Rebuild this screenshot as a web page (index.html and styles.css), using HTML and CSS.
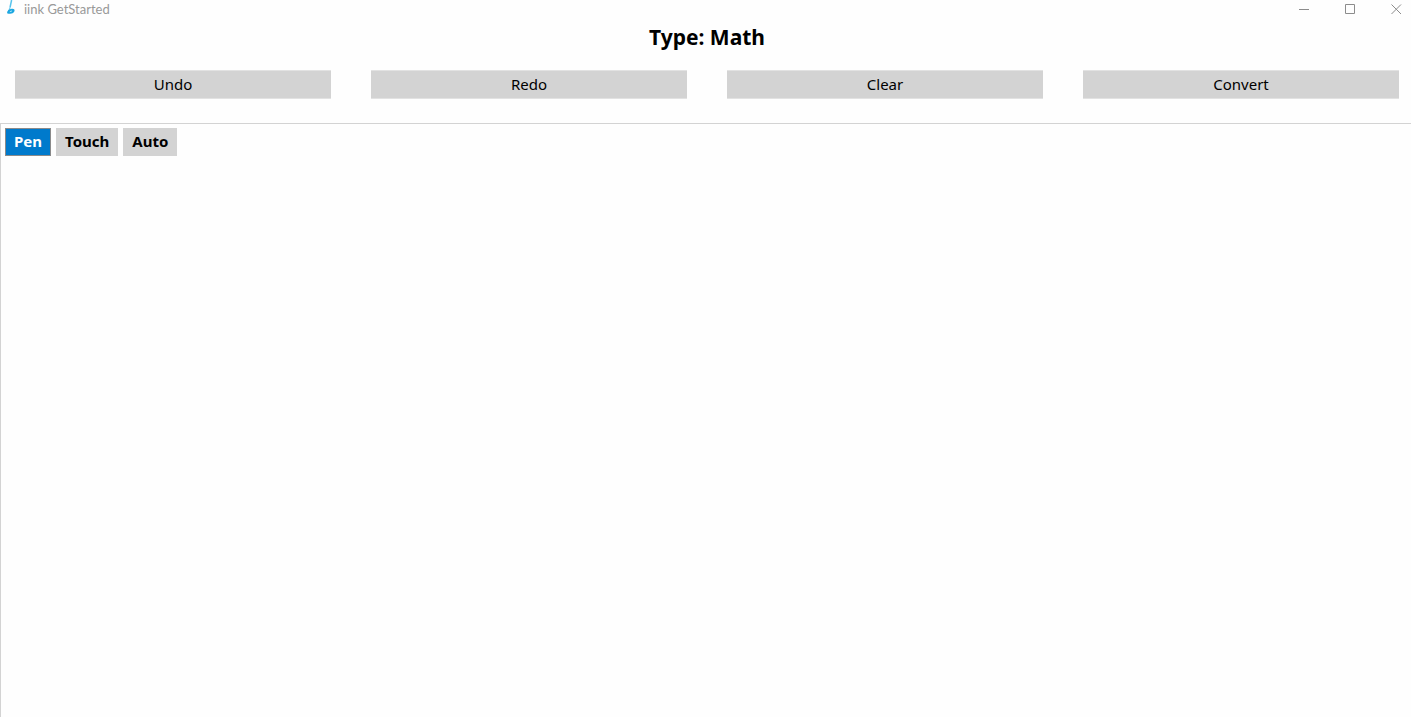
FILE: index.html
```html
<!DOCTYPE html>
<html lang="en">
<head>
<meta charset="utf-8">
<title>iink GetStarted</title>
<link rel="stylesheet" href="styles.css">
</head>
<body>
<header class="titlebar">
  <svg class="app-icon" width="10" height="15" viewBox="0 0 10 15" aria-hidden="true">
    <path d="M5.6 0 4 7.6" stroke="#55c3ec" stroke-width="1.5" fill="none"/>
    <path d="M4 7.6 3.2 10 1.6 13.2" stroke="#7fd2f0" stroke-width="1.4" fill="none"/>
    <path d="M1.2 13.2C1 10.6 3 9 5.8 8.8 8.2 8.6 9.2 9.8 8.2 11.8 7.2 13.8 4 14.2 1.2 13.2Z" fill="#1ba6e0"/>
    <path d="M3.8 11.7 6 10.9" stroke="#a5e2f7" stroke-width="1"/>
  </svg>
  <span class="app-name">iink GetStarted</span>
  <div class="window-controls">
    <button class="window-button" type="button" aria-label="Minimize"><svg width="11" height="11" viewBox="0 0 11 11"><path d="M0 5.5H10"/></svg></button>
    <button class="window-button" type="button" aria-label="Maximize"><svg width="11" height="11" viewBox="0 0 11 11"><path d="M.5.5H9.5V9.5H.5Z"/></svg></button>
    <button class="window-button" type="button" aria-label="Close"><svg width="11" height="11" viewBox="0 0 11 11"><path d="M.5.5 10 10M10 .5.5 10"/></svg></button>
  </div>
</header>
<h1 class="part-type">Type: Math</h1>
<nav class="commands">
  <button class="command" type="button">Undo</button>
  <button class="command" type="button">Redo</button>
  <button class="command" type="button">Clear</button>
  <button class="command" type="button">Convert</button>
</nav>
<main class="editor">
  <div class="modes">
    <button class="mode mode-active" type="button" aria-pressed="true">Pen</button>
    <button class="mode" type="button" aria-pressed="false">Touch</button>
    <button class="mode" type="button" aria-pressed="false">Auto</button>
  </div>
</main>
</body>
</html>
```
FILE: styles.css
```css
* { box-sizing: border-box; }

body {
  margin: 0;
  min-height: 100vh;
  display: flex;
  flex-direction: column;
  background: #fefefe;
  color: #000;
  font-family: "Noto Sans", "Open Sans", sans-serif;
}

button {
  margin: 0;
  font-family: inherit;
  color: inherit;
}

.titlebar {
  display: flex;
  align-items: flex-start;
  height: 20px;
  padding-left: 6px;
}

.app-name {
  margin-left: 8px;
  color: #999;
  font: 13px/19px Lato, "Noto Sans", sans-serif;
}

.window-controls {
  display: flex;
  margin-left: auto;
  height: 18px;
}

.window-button {
  display: flex;
  align-items: center;
  justify-content: flex-end;
  width: 46px;
  padding: 0 9px 0 0;
  border: 0;
  background: none;
}

.window-button svg {
  fill: none;
  stroke: #8c8c8c;
}

.part-type {
  margin: 0;
  padding-left: 3px;
  font-size: 21px;
  line-height: 34px;
  text-align: center;
}

.commands {
  display: grid;
  grid-template-columns: repeat(4, 1fr);
  gap: 40px;
  padding: 16px 12px 24px 15px;
}

.command {
  height: 29px;
  padding: 0;
  border: 1px solid #e2e2e2;
  border-width: 1px 0;
  background: #d3d3d3;
  font-size: 15px;
  line-height: 27px;
}

.editor {
  flex: 1;
  border: 1px solid #d3d3d3;
  border-width: 1px 0 0 1px;
  padding: 4px;
}

.modes {
  display: flex;
  gap: 5px;
}

.mode {
  height: 28px;
  padding: 0 8px 2px;
  border: 1px solid #d3d3d3;
  background: #d3d3d3;
  font-size: 15px;
  font-weight: 700;
  line-height: 24px;
}

.mode-active {
  border-color: #8a8a8a;
  background: #007acc;
  color: #fff;
}
```
